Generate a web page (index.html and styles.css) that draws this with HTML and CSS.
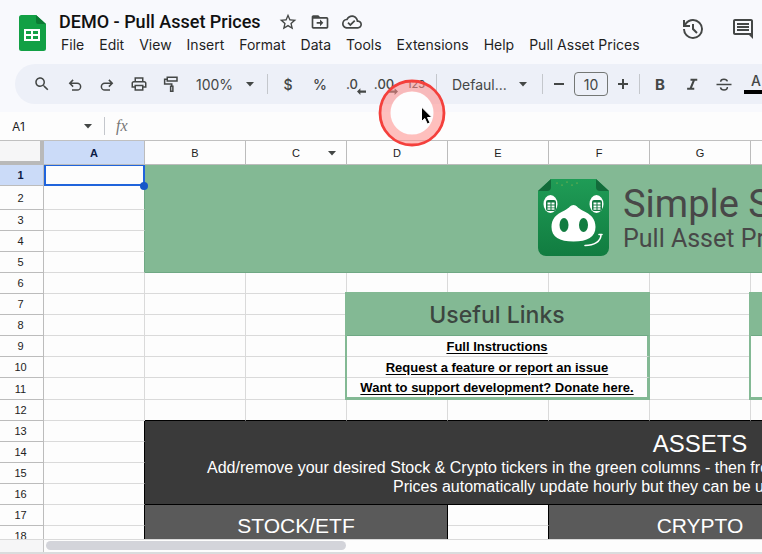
FILE: index.html
```html
<!DOCTYPE html>
<html lang="en">
<head>
<meta charset="utf-8">
<meta name="viewport" content="width=device-width, initial-scale=1">
<title>DEMO - Pull Asset Prices</title>
<link rel="stylesheet" href="styles.css">
</head>
<body>
<header class="header">
  <svg class="logo" viewBox="0 0 27 36" aria-hidden="true">
    <path fill="#12a045" d="M2.500 0H17l10 9v24.500a2.500 2.500 0 0 1-2.500 2.500h-22A2.500 2.500 0 0 1 0 33.500v-31A2.500 2.500 0 0 1 2.500 0z"/>
    <path fill="#0b7a33" d="M17 0l10 9h-8a2 2 0 0 1-2-2z"/>
    <path fill="#fff" fill-rule="evenodd" d="M5 14h16v12H5zm2 2v3h5v-3zm7 0v3h5v-3zm-7 5v3h5v-3zm7 0v3h5v-3z"/>
  </svg>
  <div class="doc">
    <div class="title-row">
      <h1 class="title">DEMO - Pull Asset Prices</h1>
      <div class="title-icons">
        <button class="mini" aria-label="Star"><svg viewBox="0 0 24 24"><path d="M22 9.240l-7.190-.62L12 2 9.190 8.630 2 9.240l5.460 4.730L5.820 21 12 17.270 18.180 21l-1.630-7.030L22 9.240zM12 15.400l-3.760 2.270 1-4.280-3.320-2.880 4.380-.38L12 6.100l1.710 4.040 4.380.38-3.320 2.880 1 4.280L12 15.400z"/></svg></button>
        <button class="mini" aria-label="Move"><svg viewBox="0 0 24 24"><path d="M20 6h-8l-2-2H4c-1.100 0-2 .9-2 2v12c0 1.100.9 2 2 2h16c1.100 0 2-.9 2-2V8c0-1.100-.9-2-2-2zm0 12H4V8h16v10zm-8-1l4-4-4-4v3H8v2h4z"/></svg></button>
        <button class="mini" aria-label="Saved"><svg viewBox="0 0 24 24"><path d="M19.350 10.040C18.670 6.590 15.640 4 12 4 9.110 4 6.600 5.640 5.350 8.040 2.340 8.360 0 10.910 0 14c0 3.310 2.690 6 6 6h13c2.760 0 5-2.240 5-5 0-2.640-2.050-4.780-4.650-4.960zM19 18H6c-2.210 0-4-1.790-4-4 0-2.050 1.530-3.760 3.560-3.970l1.070-.11.5-.95C8.080 7.140 9.940 6 12 6c2.620 0 4.880 1.860 5.390 4.430l.3 1.500 1.530.11c1.560.1 2.780 1.410 2.780 2.960 0 1.650-1.350 3-3 3zm-9-3.820l-2.090-2.090L6.500 13.500 10 17l6.010-6.010-1.410-1.410z"/></svg></button>
      </div>
    </div>
    <nav class="menu" aria-label="Menu">
      <button>File</button><button>Edit</button><button>View</button><button>Insert</button><button>Format</button><button>Data</button><button>Tools</button><button>Extensions</button><button>Help</button><button>Pull Asset Prices</button>
    </nav>
  </div>
  <div class="actions">
    <button class="action" aria-label="Version history"><svg viewBox="0 0 24 24"><path d="M12 2a10 10 0 0 0-8 4V3H2v7h7V8H5.100A8 8 0 1 1 4 12H2A10 10 0 1 0 12 2zm-1 5v5.400l4.300 4.300 1.400-1.400-3.700-3.700V7z"/></svg></button>
    <button class="action" aria-label="Comments"><svg viewBox="0 0 24 24"><path d="M22 4c0-1.100-.9-2-2-2H4c-1.100 0-2 .9-2 2v12c0 1.100.9 2 2 2h14l4 4V4zm-2 12H4V4h16v12zM6 12h12v2H6zm0-3h12v2H6zm0-3h12v2H6z"/></svg></button>
  </div>
</header>

<div class="toolbar" role="toolbar" aria-label="Formatting">
  <button class="tool search" aria-label="Search"><svg viewBox="0 0 24 24"><path d="M15.500 14h-.79l-.28-.27C15.410 12.590 16 11.110 16 9.500 16 5.910 13.090 3 9.500 3S3 5.910 3 9.500 5.910 16 9.500 16c1.610 0 3.090-.59 4.230-1.570l.27.28v.79l5 4.990L20.490 19l-4.990-5zm-6 0C7.010 14 5 11.990 5 9.500S7.010 5 9.500 5 14 7.010 14 9.500 11.990 14 9.500 14z"/></svg></button>
  <button class="tool" aria-label="Undo"><svg viewBox="0 0 24 24"><path class="line" d="M8 20h7a4.500 4.500 0 0 0 0-9H5.500M9.500 6.500L5 11l4.500 4.500"/></svg></button>
  <button class="tool" aria-label="Redo"><svg viewBox="0 0 24 24"><path class="line" d="M16 20H9a4.500 4.500 0 0 1 0-9h9.500M14.500 6.500L19 11l-4.500 4.500"/></svg></button>
  <button class="tool" aria-label="Print"><svg viewBox="0 0 24 24"><path d="M19 8h-1V3H6v5H5c-1.660 0-3 1.340-3 3v6h4v4h12v-4h4v-6c0-1.660-1.340-3-3-3zM8 5h8v3H8V5zm8 12v2H8v-4h8v2zm2-2v-2H6v2H4v-4c0-.55.45-1 1-1h14c.55 0 1 .45 1 1v4h-2z"/></svg></button>
  <button class="tool" aria-label="Paint format"><svg viewBox="0 0 24 24"><path class="line" d="M7 3h13v5H7zM7 5.500H3.500V12H13v3M11.500 15h3v6.500h-3z"/></svg></button>
  <label class="drop zoom"><select aria-label="Zoom"><option>100%</option></select><svg viewBox="0 0 10 5"><path d="M1 0h8L5 4.500z"/></svg></label>
  <span class="sep"></span>
  <button class="tool sign">$</button>
  <button class="tool sign">%</button>
  <button class="tool dec">.0<svg class="arrow" viewBox="0 0 8 6" aria-hidden="true"><path d="M0 3l3-3v2h5v2H3v2z"/></svg></button>
  <button class="tool dec">.00<svg class="arrow" viewBox="0 0 8 6" aria-hidden="true"><path d="M8 3L5 0v2H0v2h5v2z"/></svg></button>
  <button class="tool num">123</button>
  <span class="sep"></span>
  <label class="drop font"><select aria-label="Font"><option>Defaul...</option></select><svg viewBox="0 0 10 5"><path d="M1 0h8L5 4.500z"/></svg></label>
  <span class="sep"></span>
  <button class="step" aria-label="Decrease font size"><svg viewBox="0 0 12 12"><path d="M1 5h10v2H1z"/></svg></button>
  <input class="size" type="text" value="10" aria-label="Font size">
  <button class="step" aria-label="Increase font size"><svg viewBox="0 0 12 12"><path d="M1 5h4V1h2v4h4v2H7v4H5V7H1z"/></svg></button>
  <span class="sep"></span>
  <button class="tool bold">B</button>
  <button class="tool" aria-label="Italic"><svg viewBox="0 0 24 24"><path d="M10 5v2.500h2.800L9 17H5.500v2.500H15V17h-3l3.800-9.500H19V5z"/></svg></button>
  <button class="tool" aria-label="Strikethrough"><svg viewBox="0 0 24 24"><path class="line" d="M2 12.500h20M16.500 8.500C16 6.500 14.500 5.500 12 5.500S7.500 6.800 7.500 9M16.500 16c0 2.500-1.800 4-4.500 4s-4.300-1.300-4.700-3.500"/></svg></button>
  <button class="tool color">A</button>
</div>

<div class="formula">
  <label class="name"><input type="text" value="A1" aria-label="Name box"><svg viewBox="0 0 10 5"><path d="M1 0h8L5 4.500z"/></svg></label>
  <label class="fx" for="fx">fx</label>
  <input class="fx-input" id="fx" type="text">
</div>

<main class="sheet">
<table class="grid">
<colgroup><col class="c-head"><col span="12" class="c"></colgroup>
<thead>
<tr><td class="corner"></td><th class="on">A</th><th>B</th><th>C<svg class="caret" viewBox="0 0 10 5" aria-hidden="true"><path d="M1 0h8L5 4.500z"/></svg></th><th>D</th><th>E</th><th>F</th><th>G</th><th>H</th><th>I</th><th>J</th><th>K</th><th>L</th></tr>
</thead>
<tbody>
<tr><th class="on">1</th><td class="active"></td>
<td class="banner" colspan="11" rowspan="5"><div class="brand">
<svg class="pig" viewBox="0 0 71 77" aria-hidden="true">
<defs><linearGradient id="g" x1="0" y1="0" x2="0" y2="1"><stop offset="0" stop-color="#1f9c56"/><stop offset="1" stop-color="#117c40"/></linearGradient></defs>
<path fill="url(#g)" d="M13 0h45l13 12v57a8 8 0 0 1-8 8H8a8 8 0 0 1-8-8V12z"/>
<path fill="#126b3a" d="M13 0v8a4 4 0 0 1-4 4H0zM58 0v8a4 4 0 0 0 4 4h9z"/>
<g fill="#d9c64a"><circle cx="19" cy="4" r=".5"/><circle cx="24" cy="6" r=".5"/><circle cx="29" cy="3" r=".5"/><circle cx="34" cy="6" r=".5"/><circle cx="39" cy="4" r=".5"/></g>
<ellipse cx="12.500" cy="25" rx="7" ry="9" fill="#fff"/><ellipse cx="58.500" cy="25" rx="7" ry="9" fill="#fff"/>
<path fill="#157a43" d="M10 21h6a2 2 0 0 1 2 2v7a2 2 0 0 1-2 2h-6a2 2 0 0 1-2-2v-7a2 2 0 0 1 2-2zM56 21h6a2 2 0 0 1 2 2v7a2 2 0 0 1-2 2h-6a2 2 0 0 1-2-2v-7a2 2 0 0 1 2-2z"/>
<path fill="#fff" d="M9.500 23.500h3v2h-3zM13.500 23.500h3v2h-3zM9.500 26.500h3v2h-3zM13.500 26.500h3v2h-3zM9.500 29.300h3v1.500h-3zM13.500 29.300h3v1.500h-3zM55.500 23.500h3v2h-3zM59.500 23.500h3v2h-3zM55.500 26.500h3v2h-3zM59.500 26.500h3v2h-3zM55.500 29.300h3v1.500h-3zM59.500 29.300h3v1.500h-3z"/>
<path fill="#fff" d="M35.500 26c3 0 4 3 9 5.500C53 35 57.500 40 57.500 48c0 10-8 14.500-22 14.500S13.500 58 13.500 48c0-8 4.500-13 13-16.500 5-2.500 6-5.500 9-5.500z"/>
<ellipse cx="26" cy="46" rx="4.500" ry="7" fill="#117c40"/><ellipse cx="45.500" cy="46" rx="4.500" ry="7" fill="#117c40"/>
<path fill="none" stroke="#fff" stroke-width="1.600" stroke-linecap="round" d="M47 66.500c9 0 16-4 16-11M61 55.500h3"/>
</svg>
<div class="brand-text"><div class="brand-name">Simple Sheets</div><div class="brand-sub">Pull Asset Prices</div></div>
</div></td></tr>
<tr class="tall"><th>2</th><td class="green-edge"></td></tr>
<tr><th>3</th><td class="green-edge"></td></tr>
<tr><th>4</th><td class="green-edge"></td></tr>
<tr><th>5</th><td class="green-edge"></td></tr>
<tr><th>6</th><td></td><td></td><td></td><td></td><td></td><td></td><td></td><td></td><td></td><td></td><td></td><td></td></tr>
<tr><th>7</th><td></td><td></td><td></td><td class="box box-head" colspan="3" rowspan="2">Useful Links</td><td></td><td class="box box-head" colspan="3" rowspan="2"></td><td></td><td></td></tr>
<tr><th>8</th><td></td><td></td><td></td><td></td><td></td><td></td></tr>
<tr><th>9</th><td></td><td></td><td></td><td class="box" colspan="3"><a href="#instructions">Full Instructions</a></td><td></td><td class="box blank" colspan="3"></td><td></td><td></td></tr>
<tr><th>10</th><td></td><td></td><td></td><td class="box" colspan="3"><a href="#feedback">Request a feature or report an issue</a></td><td></td><td class="box blank" colspan="3"></td><td></td><td></td></tr>
<tr class="mid"><th>11</th><td></td><td></td><td></td><td class="box box-end" colspan="3"><a href="#donate">Want to support development? Donate here.</a></td><td></td><td class="box box-end" colspan="3"></td><td></td><td></td></tr>
<tr><th>12</th><td></td><td class="pre"></td><td class="pre"></td><td class="pre"></td><td class="pre"></td><td class="pre"></td><td class="pre"></td><td class="pre"></td><td class="pre"></td><td class="pre"></td><td class="pre"></td><td class="pre"></td></tr>
<tr><th>13</th><td class="edge"></td><td class="assets" colspan="11" rowspan="4"><div class="assets-title">ASSETS</div><p class="line-one">Add/remove your desired Stock &amp; Crypto tickers in the green columns - then from</p><p class="line-two">Prices automatically update hourly but they can be updated</p></td></tr>
<tr><th>14</th><td class="edge"></td></tr>
<tr><th>15</th><td class="edge"></td></tr>
<tr><th>16</th><td class="edge"></td></tr>
<tr><th>17</th><td class="edge"></td><td class="group" colspan="3" rowspan="2">STOCK/ETF</td><td class="edge"></td><td class="group" colspan="3" rowspan="2">CRYPTO</td><td class="edge"></td><td class="group" colspan="3" rowspan="2"></td></tr>
<tr><th>18</th><td class="edge"></td><td class="edge"></td><td class="edge"></td></tr>
</tbody>
</table>
</main>
<footer class="scroll"><div class="scroll-head"></div><div class="track"><div class="thumb"></div></div></footer>

<svg class="pointer" viewBox="0 0 68 68" aria-hidden="true">
<circle cx="34" cy="34" r="22" fill="#fdfdfe"/>
<circle cx="34" cy="34" r="27" fill="none" stroke="#ff8c88" stroke-opacity=".55" stroke-width="11"/>
<circle cx="34" cy="34" r="32" fill="none" stroke="#f4403c" stroke-width="2.800"/>
<path fill="#000" stroke="#fff" stroke-width="1" d="M43.500 28v14.500l3.300-3 2.500 5.500 2.700-1.200-2.500-5.300h4.500z"/>
</svg>
</body>
</html>
```
FILE: styles.css
```css
* { box-sizing: border-box; }

body {
  margin: 0;
  height: 100vh;
  display: flex;
  flex-direction: column;
  overflow: hidden;
  position: relative;
  background: #f8f9fd;
  color: #1f1f1f;
  font-family: "Liberation Sans", Arial, sans-serif;
}

button, input, select {
  margin: 0;
  padding: 0;
  border: 0;
  background: none;
  color: inherit;
  font: inherit;
}

svg { display: block; fill: #444746; }
.line { fill: none; stroke: #444746; stroke-width: 2; }

.header {
  display: flex;
  height: 64px;
  flex: none;
  padding: 0 7px 0 19px;
  font-family: Inter, Roboto, sans-serif;
}
.logo { width: 27px; height: 36px; margin-top: 15px; flex: none; }
.doc { padding: 10px 0 0 13px; white-space: nowrap; }
.title-row { display: flex; align-items: center; height: 24px; gap: 17px; }
.title { margin: 0; font-size: 18px; line-height: 24px; font-weight: 500; color: #111; font-family: Roboto, sans-serif; }
.title-icons { display: flex; gap: 12px; }
.mini svg { width: 20px; height: 20px; }
.menu { display: flex; gap: 15px; margin-left: 2px; }
.menu button { font-size: 14px; line-height: 22px; }
.actions { display: flex; align-items: flex-start; gap: 26px; margin: 17px 0 0 auto; }
.action svg { width: 24px; height: 24px; }

.toolbar {
  display: flex;
  align-items: center;
  flex: none;
  height: 40px;
  margin-left: 15px;
  padding-left: 10px;
  border-radius: 20px 0 0 20px;
  background: #edf0f8;
  color: #444746;
  font-family: Inter, Roboto, sans-serif;
  overflow: hidden;
}
.tool {
  display: flex;
  flex: none;
  align-items: center;
  justify-content: center;
  width: 32px;
  height: 32px;
  position: relative;
  font-weight: 500;
}
.tool svg { width: 18px; height: 18px; }
.search { width: 34px; }
.sep { flex: none; width: 1px; height: 20px; margin: 0 4px; background: #c4c7cc; }
.drop { display: flex; flex: none; align-items: center; justify-content: space-between; padding: 0 8px 0 9px; font-size: 14px; }
.drop select { appearance: none; flex: 1; min-width: 0; }
.drop svg, .name svg, .caret { width: 10px; height: 5px; flex: none; }
.zoom { width: 76px; }
.font { width: 97px; padding: 0 10px 0 11px; }
.sign { font-size: 14px; }
.dec { font-size: 13px; }
.tool .arrow { position: absolute; right: 2px; bottom: 5px; width: 9px; height: 7px; }
.num { font-size: 11px; }
.step { display: flex; flex: none; align-items: center; justify-content: center; width: 24px; height: 24px; }
.step svg { width: 12px; height: 12px; }
.size { flex: none; width: 34px; height: 24px; margin: 0 3px; border: 1px solid #747775; border-radius: 4px; text-align: center; font-size: 14px; }
.bold { font-size: 15px; font-weight: 700; }
.tool.color { width: 24px; height: 20px; margin-left: 4px; align-items: flex-start; border-bottom: 4px solid #000; font-size: 14px; line-height: 14px; }

.formula {
  display: flex;
  align-items: center;
  flex: none;
  height: 29px;
  margin-top: 8px;
  border-bottom: 1px solid #c0c0c0;
  background: #fdfdfd;
}
.name { display: flex; align-items: center; width: 105px; height: 18px; padding: 0 11px 0 12px; border-right: 1px solid #c4c7cc; font: 12px Inter, sans-serif; }
.name input { flex: 1; min-width: 0; }
.fx { width: 34px; padding-left: 11px; font: italic 16px "Liberation Serif", serif; color: #777; }
.fx-input { flex: 1; }

.sheet { flex: 1; min-height: 0; overflow: hidden; background: #fdfdfd; }
.grid { width: 1256px; table-layout: fixed; border-collapse: separate; border-spacing: 0; font-size: 13px; line-height: 16px; }
.c-head { width: 44px; }
.c { width: 101px; }
.grid td, .grid th { padding: 0; border: solid #dadada; border-width: 0 1px 1px 0; }
.grid tr { height: 21px; }
.grid thead tr { height: 24px; }
.grid .tall { height: 24px; }
.grid .mid { height: 22px; }
.grid th { position: relative; border-color: #bcbcbc; font-weight: 400; font-size: 11px; line-height: 14px; color: #222; }
.grid tbody th { padding-right: 2px; }
.grid .on { background: #cbdbf8; font-weight: 700; color: #0b1c45; }
.grid .corner { border: solid #b9b9b9; border-width: 0 4px 4px 0; background: #f6f6f7; }
.caret { position: absolute; right: 9px; top: 10px; }

.grid .active { position: relative; z-index: 1; border-color: #2064dc; box-shadow: inset 2px 1px #2064dc, inset -1px -1px #2064dc; }
.active::after { content: ""; position: absolute; right: -4px; bottom: -5px; width: 8px; height: 8px; border-radius: 50%; background: #1757c8; }

.grid .banner { background: #83b994; border-color: #6fa884; vertical-align: top; }
.grid .green-edge { border-right-color: #6fa884; }
.brand { display: flex; gap: 14px; margin: 14px 0 0 393px; color: #484848; font-family: Roboto, sans-serif; font-weight: 400; white-space: nowrap; }
.pig { width: 71px; height: 77px; flex: none; }
.brand-name { margin-top: 4px; font-size: 38px; line-height: 42px; }
.brand-sub { font-size: 25px; line-height: 28px; }

.grid .box { position: relative; z-index: 1; padding-top: 1px; border-right: 3px solid #83b994; box-shadow: -2px 0 #83b994; text-align: center; font-weight: 700; font-size: 13px; white-space: nowrap; }
.box a { color: #000; text-underline-offset: 2px; }
.grid .box-head { background: #83b994; border-bottom-color: #6fa884; box-shadow: -2px 0 #83b994, -2px -2px #83b994, 0 -2px #83b994; font: 500 23px Inter, sans-serif; color: #3c4640; }
.grid .box-end { border-bottom: 3px solid #83b994; }
.grid .blank { border-bottom-color: #fdfdfd; }

.grid .pre { border-bottom-color: #000; }
.grid .edge { border-right-color: #000; }
.grid .assets { background: #3a3a3a; border-color: #000; color: #fff; vertical-align: top; white-space: nowrap; font-size: 16px; line-height: 19px; }
.assets-title { padding-top: 9px; font-size: 24px; line-height: 28px; text-align: center; }
.assets p { margin: 0; }
.line-one { padding-left: 62px; }
.line-two { padding-left: 248px; }
.grid .group { background: #5a5a5a; border-color: #000; color: #fff; text-align: center; font-size: 21px; line-height: 24px; }

.scroll { display: flex; flex: none; height: 15px; border-top: 1px solid #dadada; border-bottom: 2px solid #dadcdd; background: #fdfdfd; }
.scroll-head { width: 44px; border-right: 1px solid #c4c4c4; background: #f6f6f7; }
.track { flex: 1; padding: 1px 2px; }
.thumb { width: 42%; height: 9px; border-radius: 5px; background: #d3d4da; }

.pointer { position: absolute; left: 378px; top: 79px; width: 68px; height: 68px; }
```
